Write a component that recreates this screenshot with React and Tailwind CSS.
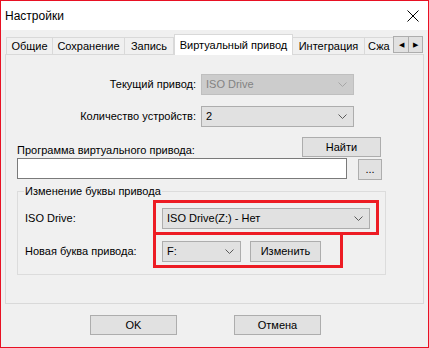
import React from 'react';

const Chevron = ({ color = '#5a5a5a' }) => (
    <svg width="9" height="6" viewBox="0 0 9 6" fill="none" stroke={color} strokeWidth="1">
        <polyline points="0.5 0.5 4.5 4.5 8.5 0.5" />
    </svg>
);

const Select = ({ value, className = '', disabled = false }) => (
    <div className={`flex items-center justify-between h-[21px] pl-[4px] pr-[6px] border ${disabled ? 'bg-[#cccccc] border-[#bfbfbf] text-[#838383]' : 'bg-[#e1e1e1] border-[#adadad] text-black'} ${className}`}>
        <span>{value}</span>
        <Chevron color={disabled ? '#a6a6a6' : '#5a5a5a'} />
    </div>
);

const Button = ({ children, className = '' }) => (
    <div className={`flex items-center justify-center border border-[#adadad] bg-[#e1e1e1] text-black ${className}`}>
        {children}
    </div>
);

const tabs = ['Общие', 'Сохранение', 'Запись', 'Виртуальный привод', 'Интеграция'];
const tabWidths = ['w-[47px]', 'w-[72px]', 'w-[49px]', 'w-[119px]', 'w-[72px]'];

export default function App() {
    return (
        <div className="w-[429px] h-[348px] bg-[#f0f0f0] border border-[#e81123] flex flex-col text-[11px] leading-none"
            style={{ fontFamily: '"Liberation Sans", Arial, sans-serif' }}>
            {/* Title bar */}
            <div className="h-[29px] bg-white flex items-center justify-between pl-[4px] pr-[9px] shrink-0">
                <span className="text-[12px] text-black">Настройки</span>
                <svg width="12" height="12" viewBox="0 0 12 12" stroke="#000" strokeWidth="1">
                    <line x1="0.5" y1="0.5" x2="11.5" y2="11.5" />
                    <line x1="11.5" y1="0.5" x2="0.5" y2="11.5" />
                </svg>
            </div>

            {/* Tabs */}
            <div className="flex items-end h-[24px] pl-[5px] mt-[0px] relative">
                {tabs.map((t, i) => (
                    i === 3 ? (
                        <div key={i} className={`${tabWidths[i]} h-[21px] bg-white border border-b-0 border-[#d9d9d9] flex items-center justify-center -mb-[1px] relative z-10 text-black`}>
                            {t}
                        </div>
                    ) : (
                        <div key={i} className={`${tabWidths[i]} h-[17px] border border-b-0 border-[#d9d9d9] ${i > 0 ? 'border-l-0' : ''} ${i === 4 ? 'border-l-0' : ''} flex items-center justify-center text-black`}>
                            {t}
                        </div>
                    )
                ))}
                <div className="w-[28px] h-[17px] border-t border-[#d9d9d9] overflow-hidden pl-[3px] flex items-center text-black">Сжа</div>
                <div className="flex h-[17px] items-stretch mb-[1px]">
                    <div className="w-[16px] border border-[#adadad] bg-[#e1e1e1] flex items-center justify-center text-[7px]">◀</div>
                    <div className="w-[14px] border border-l-0 border-[#adadad] bg-[#e1e1e1] flex items-center justify-center text-[7px]">▶</div>
                </div>
            </div>

            {/* Panel */}
            <div className="mx-[4px] h-[250px] border border-[#d9d9d9] flex flex-col relative">
                <div className="flex items-center mt-[19px]">
                    <div className="w-[190px] text-right text-black">Текущий привод:</div>
                    <Select value="ISO Drive" disabled className="ml-[5px] w-[153px]" />
                </div>
                <div className="flex items-center mt-[11px]">
                    <div className="w-[190px] text-right text-black">Количество устройств:</div>
                    <Select value="2" className="ml-[5px] w-[153px]" />
                </div>
                <div className="flex items-center justify-between mt-[10px] pl-[11px] pr-[42px]">
                    <span className="text-black mt-[6px]">Программа виртуального привода:</span>
                    <Button className="w-[79px] h-[20px]">Найти</Button>
                </div>
                <div className="flex items-start mt-[1px] pl-[11px]">
                    <div className="w-[330px] h-[21px] bg-white border border-[#7a7a7a]" />
                    <Button className="ml-[11px] mt-[1px] w-[24px] h-[21px] text-[#333]">...</Button>
                </div>

                {/* Group box */}
                <div className="relative ml-[11px] mt-[11px] w-[369px] h-[84px] border border-[#dcdcdc]">
                    <span className="absolute -top-[6px] left-[6px] px-[1px] bg-[#f0f0f0] text-black">Изменение буквы привода</span>
                    <div className="flex items-center mt-[16px] pl-[7px]">
                        <span className="w-[137px] text-black">ISO Drive:</span>
                        <Select value="ISO Drive(Z:) - Нет" className="w-[208px]" />
                    </div>
                    <div className="flex items-center mt-[12px] pl-[7px]">
                        <span className="w-[137px] text-black">Новая буква привода:</span>
                        <Select value="F:" className="w-[79px]" />
                        <Button className="ml-[9px] w-[71px] h-[21px]">Изменить</Button>
                    </div>
                    {/* Annotations */}
                    <div className="absolute left-[135px] top-[8px] w-[226px] h-[35px] border-[3px] border-[#ed1c24]" />
                    <div className="absolute left-[135px] top-[40px] w-[190px] h-[36px] border-[3px] border-[#ed1c24]" />
                </div>
            </div>

            {/* Bottom buttons */}
            <div className="flex mt-[11px] pl-[89px] gap-[57px]">
                <Button className="w-[87px] h-[20px]">OK</Button>
                <Button className="w-[87px] h-[20px]">Отмена</Button>
            </div>
        </div>
    );
}
